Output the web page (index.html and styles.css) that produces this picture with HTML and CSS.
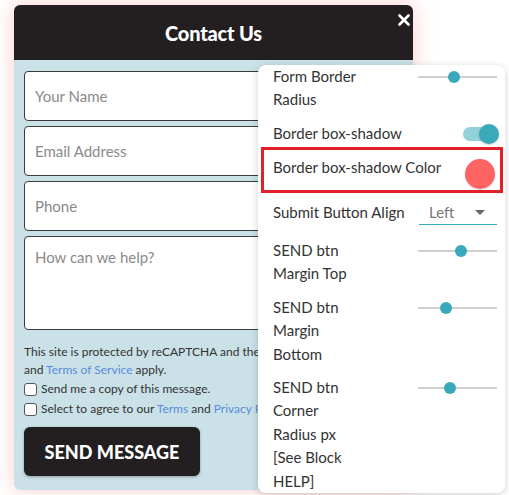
FILE: index.html
```html
<!DOCTYPE html>
<html>
<head>
<meta charset="utf-8">
<link rel="stylesheet" href="styles.css">
</head>
<body>
<div class="stage">
  <div class="card">
    <div class="card-head">
      <h1 class="title">Contact Us</h1>
      <svg class="close" width="12" height="12" viewBox="0 0 12 12"><path d="M1.5 1.5 L10.5 10.5 M10.5 1.5 L1.5 10.5" stroke="#fff" stroke-width="2.6" stroke-linecap="round"/></svg>
    </div>
    <div class="card-body">
      <div class="field">Your Name</div>
      <div class="field">Email Address</div>
      <div class="field">Phone</div>
      <div class="field area">How can we help?</div>
      <p class="legal">This site is protected by reCAPTCHA and the Google Privacy Policy<br>and <a class="lnk">Terms of Service</a> apply.</p>
      <label class="check"><span class="box"></span><span>Send me a copy of this message.</span></label>
      <label class="check"><span class="box"></span><span>Select to agree to our <a class="lnk">Terms</a> and <a class="lnk">Privacy Policy</a></span></label>
      <button class="send">SEND MESSAGE</button>
    </div>
  </div>

  <div class="panel">
    <div class="row r1">
      <div class="lbl">Form Border<br>Radius</div>
      <div class="slider"><span class="thumb" style="left:36px"></span></div>
    </div>
    <div class="row r2">
      <div class="lbl">Border box-shadow</div>
      <div class="toggle"><span class="knob"></span></div>
    </div>
    <div class="row r3 hl">
      <div class="lbl">Border box-shadow Color</div>
      <span class="swatch"></span>
    </div>
    <div class="row r4">
      <div class="lbl">Submit Button Align</div>
      <div class="select"><span>Left</span><span class="caret"></span></div>
    </div>
    <div class="row r5">
      <div class="lbl">SEND btn<br>Margin Top</div>
      <div class="slider"><span class="thumb" style="left:43px"></span></div>
    </div>
    <div class="row r6">
      <div class="lbl">SEND btn<br>Margin<br>Bottom</div>
      <div class="slider"><span class="thumb" style="left:28px"></span></div>
    </div>
    <div class="row r7">
      <div class="lbl">SEND btn<br>Corner<br>Radius px<br>[See Block<br>HELP]</div>
      <div class="slider"><span class="thumb" style="left:32px"></span></div>
    </div>
  </div>
</div>
</body>
</html>
```

FILE: styles.css
```css
* { box-sizing: border-box; }
html, body { margin: 0; padding: 0; background: #fff; }
body { font-family: "Lato", "Liberation Sans", sans-serif; overflow: hidden; }

.stage { position: relative; width: 509px; height: 495px; padding: 5px 0 0 14px; }

.card {
  width: 399px;
  border-radius: 6px;
  box-shadow: 0 0 22px rgba(255, 110, 110, 0.35);
  overflow: hidden;
}
.card-head {
  position: relative;
  height: 55px;
  background: #231f20;
  display: flex;
  align-items: center;
  justify-content: center;
}
.title { margin: 0; color: #fff; font-size: 20px; font-weight: 900; letter-spacing: -0.2px; }
.close { position: absolute; right: 3px; top: 9px; }

.card-body {
  background: #c9e1e7;
  padding: 11px 10px 14px 10px;
  display: flex;
  flex-direction: column;
}
.field {
  height: 50px;
  background: #fff;
  border: 1px solid #3b3b3b;
  border-radius: 4px;
  margin-bottom: 5px;
  padding: 0 10px;
  display: flex;
  align-items: center;
  color: #8a8a8a;
  font-size: 15px;
}
.field.area { height: 94px; align-items: flex-start; padding-top: 11px; margin-bottom: 13px; }

.legal { margin: 0; font-size: 12px; line-height: 18px; color: #333; white-space: nowrap; }
.lnk { color: #5b8bd9; }
.check { display: flex; align-items: center; font-size: 12px; line-height: 20px; color: #333; white-space: nowrap; }
.box { flex: none; width: 13px; height: 13px; border: 1px solid #555; border-radius: 3px; background: #fff; margin-right: 4px; }
.send {
  align-self: flex-start;
  margin-top: 8px;
  width: 176px;
  height: 49px;
  background: #231f20;
  color: #fff;
  border: 0;
  border-radius: 6px;
  font-family: inherit;
  font-size: 18px;
  font-weight: 900;
  box-shadow: 0 1px 3px rgba(0,0,0,0.3);
}

.panel {
  position: absolute;
  left: 258px;
  top: 65px;
  width: 247px;
  height: 428px;
  background: #fff;
  border-radius: 8px;
  box-shadow: 0 2px 8px rgba(0,0,0,0.18);
  padding: 0 8px 0 15px;
  display: flex;
  flex-direction: column;
  gap: 10px;
  font-size: 15px;
  line-height: 23.4px;
  color: #333;
}
.row { display: flex; justify-content: space-between; align-items: flex-start; }
.lbl { white-space: nowrap; }
.r4 { margin-bottom: 4px; }

.slider { position: relative; width: 79px; height: 2px; background: #cfcfcf; margin-top: 11px; }
.thumb { position: absolute; top: -5px; width: 12px; height: 12px; margin-left: -6px; border-radius: 50%; background: #3aa9b9; }

.toggle { position: relative; width: 34px; height: 14px; margin-top: 5px; border-radius: 7px; background: #93d0d8; }
.knob { position: absolute; right: -2px; top: -3px; width: 20px; height: 20px; border-radius: 50%; background: #3aa9b9; box-shadow: 0 1px 2px rgba(0,0,0,0.2); }

.hl {
  margin: -8px -6px -2px -12px;
  height: 49px;
  border: 3px solid #e3202a;
  padding: 6px 6px 0 9px;
}
.swatch { width: 30px; height: 30px; border-radius: 50%; background: #ff6464; margin-top: 3px; margin-right: -1px; box-shadow: 0 1px 2px rgba(0,0,0,0.15); }

.select {
  width: 78px;
  display: flex;
  justify-content: space-between;
  align-items: center;
  padding: 0 12px 0 10px;
  border-bottom: 1px solid #3aa9b9;
  color: #777;
}
.caret { width: 0; height: 0; border-left: 5px solid transparent; border-right: 5px solid transparent; border-top: 5px solid #666; }
```
